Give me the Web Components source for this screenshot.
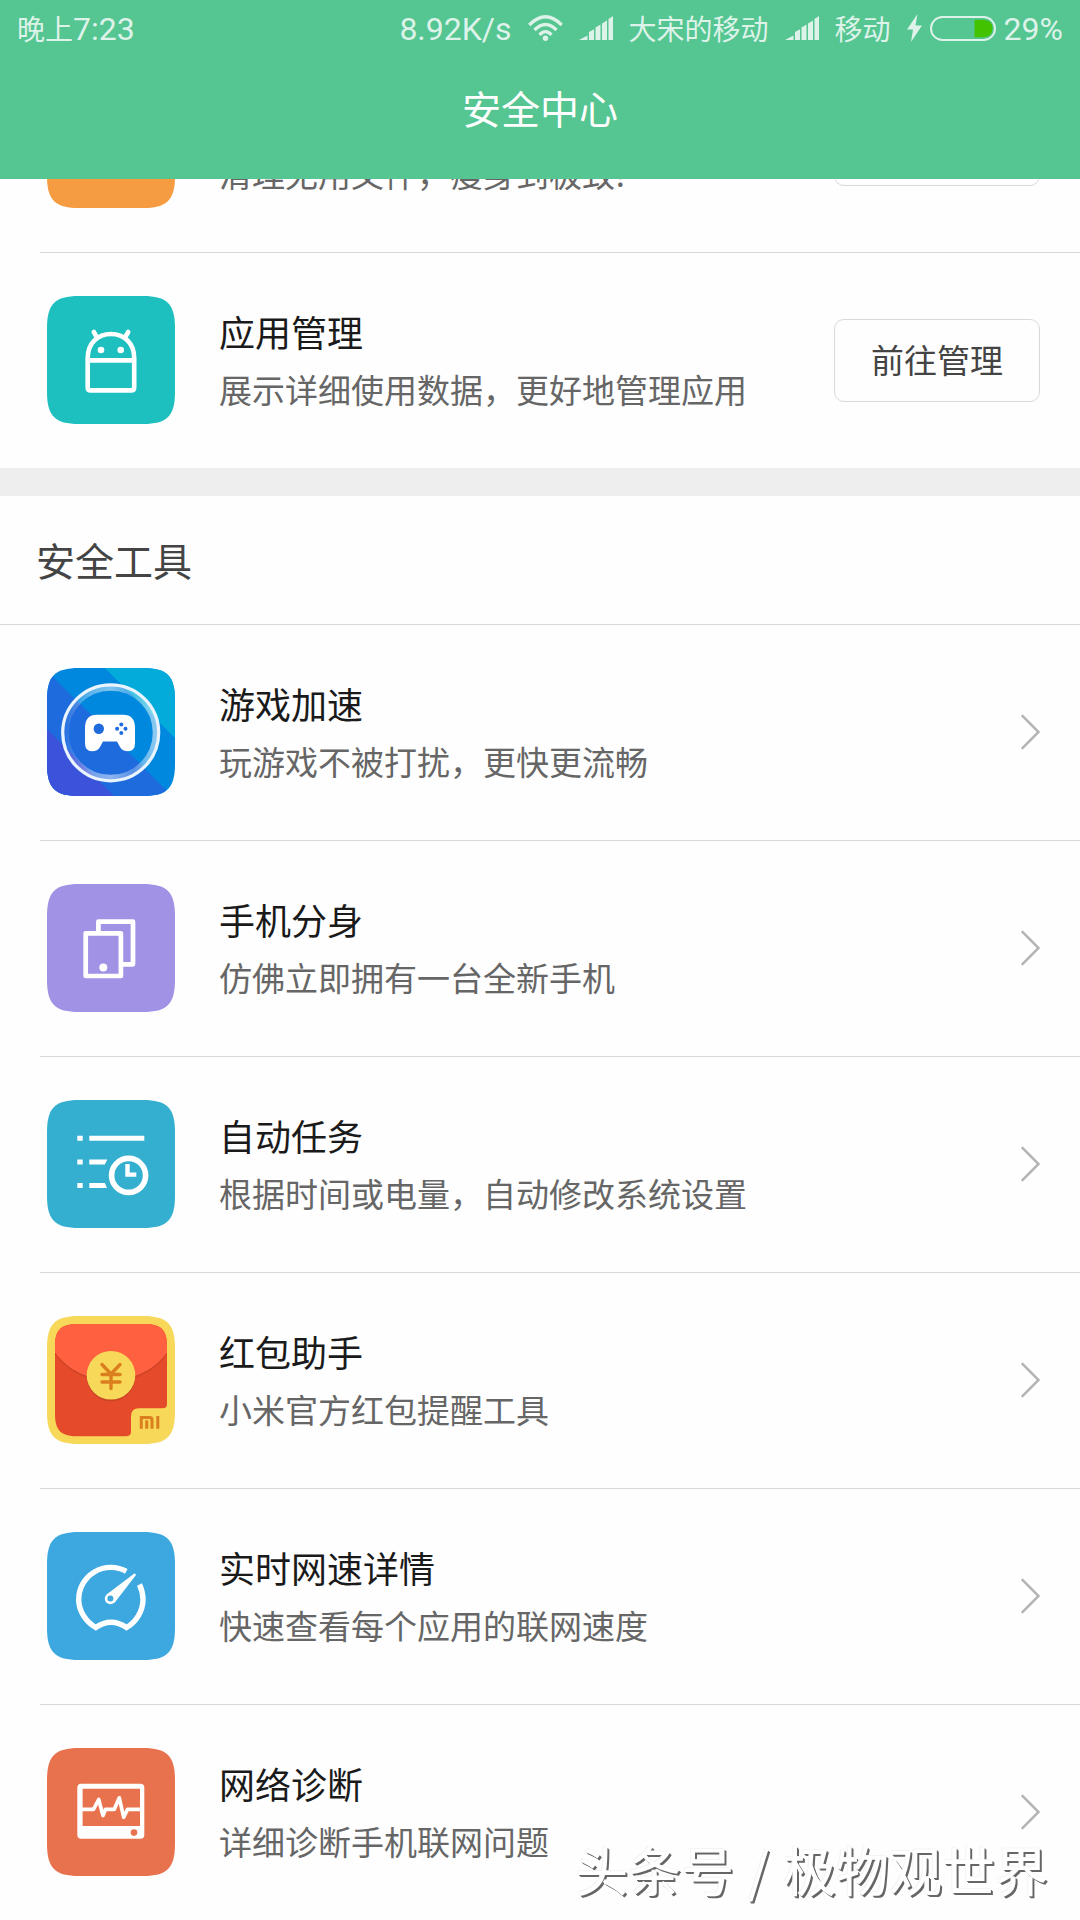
<!DOCTYPE html>
<html lang="zh-CN">
<head>
<meta charset="utf-8">
<meta name="viewport" content="width=device-width, initial-scale=1">
<title>安全中心</title>
<style>
  html, body { margin: 0; height: 100%; }
  body {
    font-family: "Noto Sans CJK SC", "Noto Sans", sans-serif;
    background: #fefefe;
    color: #1a1a1a;
    overflow: hidden;
  }
</style>
</head>
<body>
<security-app>
  <status-bar slot="header" time="7:23" period="晚上" speed="8.92K/s" sim1="大宋的移动" sim2="移动" battery="29"></status-bar>
  <title-bar slot="header">安全中心</title-bar>

  <feature-row icon="clean">
    <span slot="note">清理无用文件，瘦身到极致!</span>
    <action-button slot="action" label="立即清理"></action-button>
  </feature-row>
  <feature-row icon="apps" last>
    <span slot="title">应用管理</span>
    <span slot="note">展示详细使用数据，更好地管理应用</span>
    <action-button slot="action">前往管理</action-button>
  </feature-row>

  <section-title>安全工具</section-title>

  <feature-row icon="game" href="#game">
    <span slot="title">游戏加速</span>
    <span slot="note">玩游戏不被打扰，更快更流畅</span>
  </feature-row>
  <feature-row icon="clone" href="#clone">
    <span slot="title">手机分身</span>
    <span slot="note">仿佛立即拥有一台全新手机</span>
  </feature-row>
  <feature-row icon="tasks" href="#tasks">
    <span slot="title">自动任务</span>
    <span slot="note">根据时间或电量，自动修改系统设置</span>
  </feature-row>
  <feature-row icon="packet" href="#packet">
    <span slot="title">红包助手</span>
    <span slot="note">小米官方红包提醒工具</span>
  </feature-row>
  <feature-row icon="speed" href="#speed">
    <span slot="title">实时网速详情</span>
    <span slot="note">快速查看每个应用的联网速度</span>
  </feature-row>
  <feature-row icon="diagnose" href="#diagnose" last>
    <span slot="title">网络诊断</span>
    <span slot="note">详细诊断手机联网问题</span>
  </feature-row>

  <credit-mark slot="overlay"><span>头条号</span><span>/</span><span>极物观世界</span></credit-mark>
</security-app>

<script>
const TILE = 'M0 32C0 8 8 0 32 0H96C120 0 128 8 128 32V96C128 120 120 128 96 128H32C8 128 0 120 0 96Z';

const ICONS = {
  clean: { color: '#f59b42', art: '' },
  apps: { color: '#1dbfbf', art: `
    <g fill="none" stroke="#fff" stroke-width="4.6" stroke-linecap="round">
      <path d="M40.7 64.4V91.4Q40.7 94.4 43.7 94.4H84.2Q87.2 94.4 87.2 91.4V64.4ZM40.7 64.4V62C40.7 47 51 38 64 38S87.2 47 87.2 62V64.4"/>
      <path d="M46.8 36L50 41.5M81.2 36L78 41.5"/>
    </g>
    <circle cx="54" cy="54" r="3.3" fill="#fff"/><circle cx="73.7" cy="54" r="3.3" fill="#fff"/>` },
  game: { color: '#0088df', art: `
    <defs>
      <clipPath id="tile"><path d="${TILE}"/></clipPath>
      <clipPath id="disc"><circle cx="63.7" cy="64.8" r="42"/></clipPath>
      <linearGradient id="shine" x1="0" y1="0" x2="1" y2="0">
        <stop offset="0" stop-color="#fff" stop-opacity=".06"/>
        <stop offset=".25" stop-color="#fff" stop-opacity=".35"/>
        <stop offset=".5" stop-color="#fff" stop-opacity=".5"/>
        <stop offset=".75" stop-color="#fff" stop-opacity=".25"/>
        <stop offset="1" stop-color="#fff" stop-opacity=".55"/>
      </linearGradient>
    </defs>
    <g clip-path="url(#tile)">
      <path d="M58 0H128V70Z" fill="#03abda"/>
      <path d="M0 3V128H125Z" fill="#1e6bde"/>
      <path d="M0 61V128H67Z" fill="#3b52da"/>
    </g>
    <g clip-path="url(#disc)">
      <path d="M0 0H128V128Z" fill="#0088df"/>
      <path d="M0 3V128H125Z" fill="#1e6bde"/>
    </g>
    <circle cx="63.7" cy="64.8" r="44.5" fill="none" stroke="url(#shine)" stroke-width="5"/>
    <circle cx="63.7" cy="64.8" r="48" fill="none" stroke="#eaf4ff" stroke-width="3.2"/>
    <path fill="#fff" d="M50 46.7H76Q88 46.7 88 60V75Q88 83.3 81 83.3Q75.5 83.3 73 79L70 73.5H56L53 79Q50.5 83.3 45 83.3Q38 83.3 38 75V60Q38 46.7 50 46.7Z"/>
    <g fill="#1e6bde"><circle cx="51.8" cy="60.7" r="5.2"/>
      <circle cx="74.3" cy="56.5" r="2"/><circle cx="74.3" cy="64.9" r="2"/>
      <circle cx="70.1" cy="60.7" r="2"/><circle cx="78.5" cy="60.7" r="2"/></g>` },
  clone: { color: '#a192e6', art: `
    <g fill="none" stroke="#fff" stroke-width="4.7" stroke-linejoin="round">
      <rect x="38.7" y="49.3" width="35.2" height="42.7"/>
      <path d="M51.4 49V37.7H86V80.3H74"/>
    </g>
    <circle cx="56.3" cy="83.5" r="4" fill="#fff"/>` },
  tasks: { color: '#35afcf', art: `
    <g fill="#fff">
      <path d="M30.3 35.8h5.4v5h-5.4zM30.3 59.4h5.4v5h-5.4zM30.3 82.9h5.4v5h-5.4z"/>
      <path d="M42.3 35.8H97.3v5H42.3zM42.3 59.4H60.3L57.8 64.4H42.3zM42.3 82.9H57.8L60 87.9H42.3z"/>
      <path d="M78.3 64H82.7V72.5H89.3V76.8H78.3z"/>
    </g>
    <circle cx="81.6" cy="75.4" r="17" fill="none" stroke="#fff" stroke-width="5.6"/>` },
  packet: { color: '#f7d859', art: `
    <path fill="#e54b2a" d="M8 30C8 14 14 8 30 8H98C114 8 120 14 120 30V88Q120 92.3 115.5 92.3H92Q84 92.3 84 100.5V115.5Q84 120.3 79 120.3H30C14 120.3 8 114 8 98Z"/>
    <path fill="#cb4226" d="M8 38C22 57 42 65.2 64 65.2S106 57 120 38V35H8Z"/>
    <path fill="#ff6040" d="M8 36.5C22 55.5 42 63.5 64 63.5S106 55.5 120 36.5V30C120 14 114 8 98 8H30C14 8 8 14 8 30Z"/>
    <circle cx="64" cy="61" r="24.3" fill="#ca4326"/>
    <circle cx="64" cy="59.3" r="24.3" fill="#f7d859"/>
    <path fill="none" stroke="#db7f1e" stroke-width="3.4" stroke-linecap="round" d="M55 48.5L64 58L73 48.5M64 58V72.5M55 58.5H73M55 66H73"/>
    <path fill="none" stroke="#db7f1e" stroke-width="3" d="M94.3 112.8V101.5H102.5Q105 101.5 105 104V112.8M99.7 104.3V112.8M110.8 100V112.8"/>` },
  speed: { color: '#3da7e0', art: `
    <path fill="none" stroke="#fff" stroke-width="5.4" d="M79.3 39.3A32.2 32.2 0 0 0 31.7 67.8C31.7 79 39 90 48.7 95.5Q64 85 79.6 95.5C89 90 96 79 96 67.8Q96 60 92.5 52.5"/>
    <path fill="#fff" d="M59.6 62.5L87.3 41.5Q89.3 41.3 88.6 43.5L67.6 70.8Z"/>
    <circle cx="63.4" cy="66.6" r="5.6" fill="#fff"/><circle cx="63.4" cy="66.6" r="3" fill="#3da7e0"/>` },
  diagnose: { color: '#e9724e', art: `
    <path fill="#fff" fill-rule="evenodd" d="M34.3 35.7H93.3Q97.3 35.7 97.3 39.7V86.7Q97.3 90.7 93.3 90.7H34.3Q30.3 90.7 30.3 86.7V39.7Q30.3 35.7 34.3 35.7ZM35.6 40.7V78H93V40.7Z"/>
    <path fill="none" stroke="#fff" stroke-width="3.7" stroke-linejoin="round" d="M35 61.4H46.5L51.7 51.5L56 67.5L58.5 61.4H67.2L72.3 49.8L76.7 69.3L80.5 61.4H94"/>
    <circle cx="87" cy="84.6" r="3.3" fill="#e9724e"/>` }
};

class ShadowElement extends HTMLElement {
  connectedCallback() {
    if (this.shadowRoot) return;
    this.attachShadow({ mode: 'open' }).innerHTML = this.render();
  }
}

customElements.define('status-bar', class extends ShadowElement {
  render() {
    const a = n => this.getAttribute(n);
    const bars = `<svg width="34" height="24" viewBox="0 0 34 24" aria-hidden="true">
      <path d="M0 24L8.500 19.5V24ZM10 24V16L15 13.2V24ZM16.5 24V11.5L21.5 8.5V24ZM23 24V7.5L28 4.5V24ZM29.5 24V3L34 0V24Z"/></svg>`;
    return `
    <style>
      :host { display: flex; align-items: center; gap: 16px; height: 56px; padding: 0 17px;
              font-size: 28px; line-height: 56px; color: #ddf3e9; white-space: nowrap; }
      .time { margin-right: auto; }
      .latin { font-family: Roboto, sans-serif; font-size: 32px; line-height: 1; }
      svg { display: block; fill: #ddf3e9; flex: none; }
      .power { display: flex; align-items: center; gap: 8px; }
    </style>
    <div class="time">${a('period')}<span class="latin">${a('time')}</span></div>
    <div><span class="latin">${a('speed')}</span></div>
    <svg width="35" height="26" viewBox="0 0 35 26" aria-hidden="true">
      <g fill="none" stroke="#ddf3e9" stroke-width="3.4">
        <path d="M1.3 10Q17.5 -6.5 33.7 10M6.5 15Q17.5 4 28.5 15M11.5 19.8Q17.5 13.5 23.5 19.8"/>
      </g><circle cx="17.5" cy="23.3" r="2.7"/></svg>
    ${bars}
    <div>${a('sim1')}</div>
    ${bars}
    <div>${a('sim2')}</div>
    <div class="power">
      <svg width="15" height="28" viewBox="0 0 15 28" aria-hidden="true"><path d="M10.5 0L0 15.5H6L4 28L15 11.5H8.5Z"/></svg>
      <svg width="66" height="25" viewBox="0 0 66 25" aria-hidden="true">
        <rect x="1" y="1" width="64" height="23" rx="11.5" fill="none" stroke="#ddf3e9" stroke-width="2"/>
        <path fill="#43c300" d="M44.5 3.8H54Q62.5 4.5 62.5 12.5T54 21.2H44.5Z"/></svg>
      <div><span class="latin">${a('battery')}%</span></div>
    </div>`;
  }
});

customElements.define('title-bar', class extends ShadowElement {
  render() {
    return `
    <style>
      :host { display: block; padding-bottom: 21px; }
      h1 { margin: 0; font-size: 39px; font-weight: 400; line-height: 102px; text-align: center; color: #fff; }
    </style>
    <h1><slot></slot></h1>`;
  }
});

customElements.define('section-title', class extends ShadowElement {
  render() {
    return `
    <style>
      :host { display: block; border-top: 28px solid #eee; border-bottom: 1px solid #d9d9d9; }
      h2 { margin: 0; padding: 0 36px 2px; font-size: 39px; font-weight: 400; line-height: 126px; color: #444; }
    </style>
    <h2><slot></slot></h2>`;
  }
});

customElements.define('action-button', class extends ShadowElement {
  render() {
    const label = this.getAttribute('label');
    return `
    <style>
      :host { display: block; flex: none; }
      button { display: block; box-sizing: border-box; min-width: 206px; height: 83px; padding: 0 36px 2px;
               border: 1px solid #d9d9d9; border-radius: 10px; background: transparent;
               font: inherit; font-size: 33px; color: #444; white-space: nowrap; cursor: pointer; }
    </style>
    <button type="button"${label ? ` aria-label="${label}"` : ''}><slot></slot></button>`;
  }
});

customElements.define('tool-icon', class extends ShadowElement {
  render() {
    const { color, art } = ICONS[this.getAttribute('name')];
    return `
    <style>
      :host { display: block; flex: none; width: 128px; height: 128px; }
      svg { display: block; width: 100%; height: 100%; }
    </style>
    <svg viewBox="0 0 128 128" aria-hidden="true"><path d="${TILE}" fill="${color}"/>${art}</svg>`;
  }
});

customElements.define('feature-row', class extends ShadowElement {
  render() {
    const href = this.getAttribute('href');
    const tag = href ? 'a' : 'div';
    const end = href
      ? `<svg width="19" height="36" viewBox="0 0 19 36" aria-hidden="true"><path d="M1.5 1.8L17.5 18L1.5 34.2" fill="none" stroke="#b4b4b4" stroke-width="2.5" stroke-linecap="round"/></svg>`
      : '<slot name="action"></slot>';
    return `
    <style>
      :host { display: block; }
      .row { display: flex; align-items: center; gap: 44px; height: 214px; padding: 0 40px 1px 7px;
             margin-left: 40px; border-bottom: 1px solid #d9d9d9; color: inherit; text-decoration: none; }
      :host([last]) .row { border-bottom: 0; }
      .text { flex: 1; min-width: 0; }
      .title, .note { min-height: 58px; line-height: 58px; white-space: nowrap; }
      .title { font-size: 36px; color: #1a1a1a; }
      .note { font-size: 33px; color: #666; }
      svg { display: block; flex: none; }
    </style>
    <${tag} class="row"${href ? ` href="${href}"` : ''}>
      <tool-icon name="${this.getAttribute('icon')}"></tool-icon>
      <div class="text">
        <div class="title"><slot name="title"></slot></div>
        <div class="note"><slot name="note"></slot></div>
      </div>
      ${end}
    </${tag}>`;
  }
});

customElements.define('credit-mark', class extends ShadowElement {
  render() {
    return `
    <style>
      :host { position: absolute; right: 32px; bottom: 21px; display: flex; gap: 14px;
              font-size: 53px; line-height: 60px; color: #fff; white-space: nowrap; pointer-events: none;
              text-shadow: -1px -1px 0 #f4f4f4, 1px 1px 0 #666, 2px 2px 0 #666; }
    </style>
    <slot></slot>`;
  }
});

customElements.define('security-app', class extends ShadowElement {
  render() {
    return `
    <style>
      :host { position: relative; display: flex; flex-direction: column; height: 100vh; }
      header { flex: none; background: #55c591; }
      main { flex: 1; min-height: 0; overflow-y: auto; scrollbar-width: none; }
    </style>
    <header><slot name="header"></slot></header>
    <main><slot></slot></main>
    <slot name="overlay"></slot>`;
  }
  connectedCallback() {
    super.connectedCallback();
    // The list opens at its end, with the tools in view.
    const list = this.shadowRoot.querySelector('main');
    list.scrollTop = list.scrollHeight;
  }
});
</script>
</body>
</html>
